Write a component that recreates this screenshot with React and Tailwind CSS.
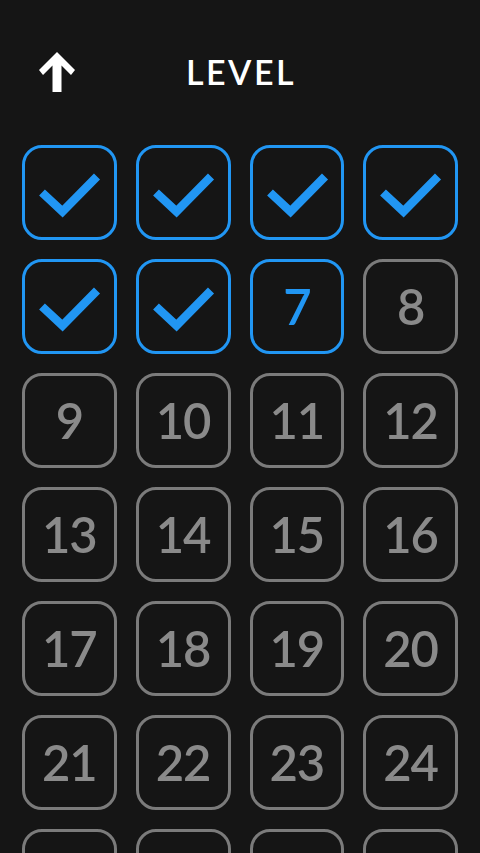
const levels = Array.from({ length: 28 }, (_, i) => i + 1);
const done = 6;
const current = 7;

function UpArrow() {
  return (
    <svg width="36" height="40" viewBox="0 0 36 40" className="block">
      <polygon
        points="18,0 36,18 32,23 22.5,13.5 22.5,40 13.5,40 13.5,13.5 4,23 0,18"
        fill="#ffffff"
      />
    </svg>
  );
}

function Check() {
  return (
    <svg width="95" height="95" viewBox="0 0 95 95" className="absolute -left-[3px] -top-[3px]">
      <polyline
        points="20,47.5 40.5,66.5 75,31.5"
        fill="none"
        stroke="#2196f3"
        strokeWidth="8.5"
        strokeLinejoin="miter"
      />
    </svg>
  );
}

function Tile({ n }) {
  if (n <= done) {
    return (
      <div className="relative h-[95px] w-full rounded-[20px] border-[3px] border-[#2196f3]">
        <Check />
      </div>
    );
  }
  const active = n === current;
  return (
    <div
      className={
        active
          ? "flex h-[95px] w-full items-center justify-center rounded-[20px] border-[3px] border-[#2196f3] text-[#2196f3]"
          : "flex h-[95px] w-full items-center justify-center rounded-[20px] border-[3px] border-[#7b7b7b] text-[#8a8a8a]"
      }
    >
      <span className="text-[49px] font-semibold leading-none tracking-[-1px]">{n}</span>
    </div>
  );
}

export default function App() {
  return (
    <div
      className="h-[853px] w-[480px] overflow-hidden bg-[#151515]"
      style={{ fontFamily: "Lato, 'Noto Sans', sans-serif" }}
    >
      <div className="relative flex h-[145px] items-start justify-center pt-[55px]">
        <div className="absolute left-[39px] top-[52px]">
          <UpArrow />
        </div>
        <h1 className="pl-[2px] text-[34px] font-semibold leading-none tracking-[2.5px] text-white">LEVEL</h1>
      </div>
      <div className="grid grid-cols-4 gap-x-[19px] gap-y-[19px] px-[22px]">
        {levels.map((n) => (
          <Tile key={n} n={n} />
        ))}
      </div>
    </div>
  );
}
